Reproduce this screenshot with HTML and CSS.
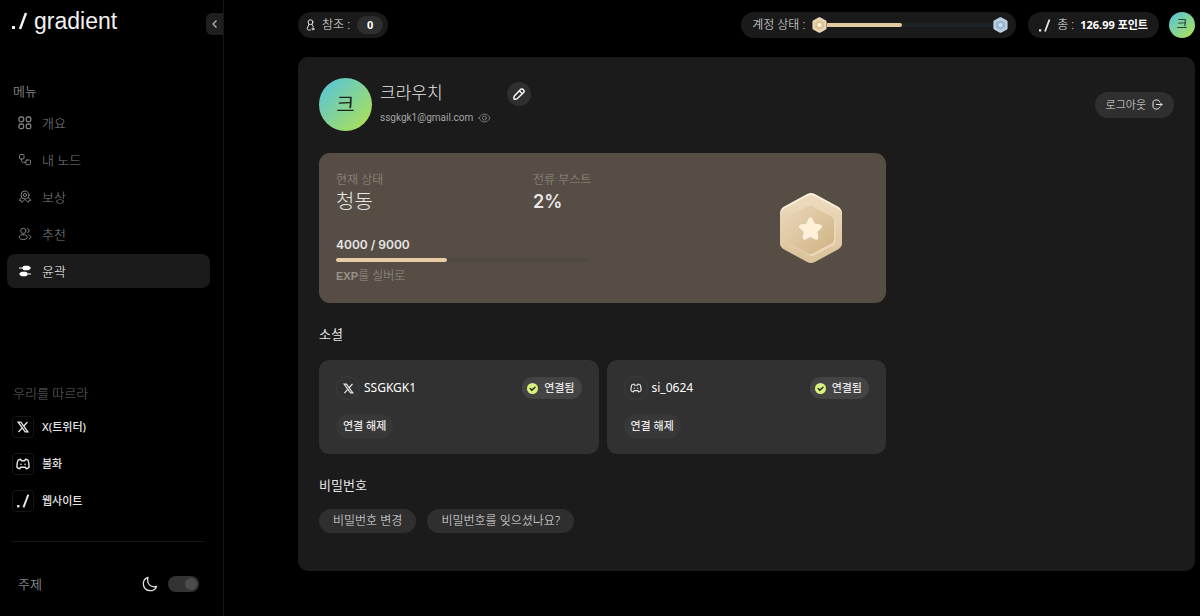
FILE: index.html
```html
<!DOCTYPE html>
<html lang="ko">
<head>
  <meta charset="UTF-8">
  <meta name="viewport" content="width=device-width, initial-scale=1.0">
  <title>Gradient</title>
  <link rel="stylesheet" href="styles.css">
</head>
<body>
  <!-- Shared icons -->
  <svg class="sprite" aria-hidden="true">
    <defs>
      <linearGradient id="bronzeFace" x1="0" y1="0" x2="0" y2="1">
        <stop offset="0" stop-color="#ecd9bc"/>
        <stop offset="1" stop-color="#dcc49c"/>
      </linearGradient>
      <linearGradient id="bronzeInner" x1="0" y1="0" x2="1" y2="1">
        <stop offset="0" stop-color="#e6d2b4"/>
        <stop offset="1" stop-color="#d2b688"/>
      </linearGradient>
      <symbol id="slash" viewBox="0 0 16 20">
        <rect x="0" y="15" width="3" height="3" fill="currentColor"/>
        <line x1="8" y1="18" x2="14" y2="2" stroke="currentColor" stroke-width="2.4"/>
      </symbol>
      <symbol id="xlogo" viewBox="0 0 12 12">
        <path d="M1.2 1.2h2.6l7 9.6H8.2z" fill="none" stroke="currentColor" stroke-width="1.3"/>
        <path d="M10.4 1 6.7 5.2M5.2 6.9 1.5 11" stroke="currentColor" stroke-width="1.3"/>
      </symbol>
      <symbol id="discord" viewBox="0 0 14 12">
        <path d="M4.6 1.2C3.3 1.4 2.500 1.700 2 2.200 1.200 4 .8 6.500.9 9c.6.900 1.600 1.500 2.800 1.800L4.600 9.200h4.800l.9 1.600c1.200-.3 2.200-.9 2.800-1.800.1-2.500-.3-5-1.100-6.800-.5-.5-1.300-.8-2.600-1L8.800 2.700H5.200z" fill="none" stroke="currentColor" stroke-width="1.400" stroke-linejoin="round"/>
        <circle cx="5" cy="6.200" r=".8" fill="currentColor"/>
        <circle cx="9" cy="6.200" r=".8" fill="currentColor"/>
      </symbol>
      <symbol id="check" viewBox="0 0 12 12">
        <circle cx="6" cy="6" r="6" fill="#d9f27e"/>
        <path d="M3.500 6.100 5.300 7.900 8.700 4.600" fill="none" stroke="#222" stroke-width="1.500" stroke-linecap="round"/>
      </symbol>
    </defs>
  </svg>

  <div class="layout">
    <!-- Sidebar -->
    <aside class="sidebar">
      <div class="brand">
        <a class="logo" href="#"><svg width="16" height="20"><use href="#slash"/></svg><span>gradient</span></a>
        <button class="collapse" type="button" aria-label="접기">
          <svg width="7" height="10" viewBox="0 0 7 10"><path d="M5.500 1.500 2 5l3.500 3.500" fill="none" stroke="currentColor" stroke-width="1.200"/></svg>
        </button>
      </div>

      <h2 class="side-title menu-title">메뉴</h2>
      <nav class="nav">
        <a class="nav-item" href="#">
          <svg width="14" height="14" viewBox="0 0 14 14" class="line bold"><rect x="1" y="1" width="4.600" height="4.600" rx="1.600"/><rect x="8.200" y="1" width="4.600" height="4.600" rx="1.600"/><rect x="1" y="8" width="4.600" height="4.600" rx="1.600"/><rect x="8.200" y="8" width="4.600" height="4.600" rx="1.600"/></svg>
          개요
        </a>
        <a class="nav-item" href="#">
          <svg width="14" height="14" viewBox="0 0 14 14" class="line"><rect x="1.500" y="1.500" width="4.500" height="4.500" rx="1"/><rect x="7.800" y="7" width="4.700" height="4.700" rx="1"/><path d="M3.500 6v1.500c0 1.200.7 1.900 1.900 1.900h2.400"/></svg>
          내 노드
        </a>
        <a class="nav-item" href="#">
          <svg width="14" height="14" viewBox="0 0 14 14" class="line"><circle cx="7" cy="5" r="4"/><circle cx="7" cy="5" r="1.600"/><path d="M3.600 7.400 1.200 10.300l1.900.3.900 1.800L7 9.300l3 3.100.9-1.800 1.900-.3-2.400-2.900"/></svg>
          보상
        </a>
        <a class="nav-item" href="#">
          <svg width="14" height="14" viewBox="0 0 14 14" class="line"><circle cx="5.300" cy="3.800" r="2.600"/><path d="M5.300 7.600c-2.300 0-4 1-4 2.500s1.700 2.400 4 2.400 4-.9 4-2.400-1.700-2.500-4-2.500zM9.500 1.500a2.400 2.400 0 0 1 0 4.500M10.800 8c1.300.4 2 1.100 2 2s-.6 1.600-1.700 2"/></svg>
          추천
        </a>
        <a class="nav-item active" href="#">
          <svg width="14" height="14" viewBox="0 0 14 14"><path d="M1 4h12M1 10h12" stroke="currentColor" stroke-width="1.200"/><rect x="4.500" y="1.800" width="7.500" height="4.400" rx="2" fill="currentColor"/><rect x="2" y="7.800" width="7.500" height="4.400" rx="2" fill="currentColor"/></svg>
          윤곽
        </a>
      </nav>

      <h2 class="side-title follow-title">우리를 따르라</h2>
      <div class="follow">
        <a class="follow-item" href="#"><span class="follow-icon"><svg width="12" height="12"><use href="#xlogo"/></svg></span>X(트위터)</a>
        <a class="follow-item" href="#"><span class="follow-icon"><svg width="14" height="12"><use href="#discord"/></svg></span>불화</a>
        <a class="follow-item" href="#"><span class="follow-icon"><svg width="13" height="16"><use href="#slash"/></svg></span>웹사이트</a>
      </div>

      <div class="theme">
        <label for="theme">주제</label>
        <svg width="16" height="16" viewBox="0 0 16 16" class="moon"><path d="M6 1.300C3.200 2.200 1.300 4.800 1.300 7.800c0 3.800 3 6.900 6.800 6.900 2.900 0 5.400-1.700 6.400-4.300-.8.300-1.500.4-2.300.4-3.700 0-6.600-2.900-6.600-6.500 0-1 .1-2 .4-3z"/></svg>
        <input type="checkbox" id="theme" class="switch" checked>
      </div>
    </aside>
    <!-- End Sidebar -->

    <main class="main">
      <header class="topbar">
        <div class="pill referral">
          <svg width="9" height="12" viewBox="0 0 9 12" class="line"><circle cx="4.500" cy="3.200" r="2.400"/><path d="M3 5.400 1.200 9.300c-.2 1 .5 1.700 1.400 1.700h1.700M6 5.400l1.300 2.200"/><circle cx="7" cy="9.900" r="1"/></svg>
          <span>참조 :</span>
          <span class="count">0</span>
        </div>
        <div class="pill account">
          <span>계정 상태 :</span>
          <div class="level">
            <svg width="15" height="16" viewBox="0 0 15 16"><path d="M7.500 1.500 13.300 4.700v6.600L7.500 14.500 1.700 11.300V4.700z" fill="#dcc397" stroke="#e8d5b4" stroke-width="2.600" stroke-linejoin="round"/><circle cx="7.500" cy="8" r="2" fill="#fff3de"/></svg>
            <div class="level-track"><div class="level-fill"></div></div>
            <svg width="15" height="16" viewBox="0 0 15 16"><path d="M7.500 1.500 13.300 4.700v6.600L7.500 14.500 1.700 11.300V4.700z" fill="#9db6d0" stroke="#bccfe2" stroke-width="2.600" stroke-linejoin="round"/><circle cx="7.500" cy="8" r="2" fill="#cbe2f8"/></svg>
          </div>
        </div>
        <div class="pill points">
          <svg width="12" height="15"><use href="#slash"/></svg>
          <span>총 :</span>
          <strong>126.99 포인트</strong>
        </div>
        <div class="avatar small">크</div>
      </header>

      <section class="panel">
        <div class="profile">
          <div class="avatar">크</div>
          <div class="who">
            <h1>크라우치</h1>
            <div class="email">
              <span>ssgkgk1@gmail.com</span>
              <svg width="13" height="10" viewBox="0 0 13 10" class="line"><path d="M1 5c1.300-2.500 3.200-3.900 5.500-3.900S10.700 2.500 12 5c-1.300 2.500-3.200 3.900-5.500 3.900S2.300 7.500 1 5z"/><circle cx="6.500" cy="5" r="2"/></svg>
            </div>
          </div>
          <button class="edit" type="button" aria-label="편집">
            <svg width="14" height="14" viewBox="0 0 14 14"><path d="M8.500 2.400 2.600 8.700c-.7.800-1 3-.6 3.400s2.600.1 3.400-.6l6.200-5.900c1.700-1.700-1.400-4.900-3.100-3.200zM7.300 3.700l3.100 3.100" fill="none" stroke="currentColor" stroke-width="1.400" stroke-linejoin="round"/></svg>
          </button>
          <button class="logout" type="button">
            로그아웃
            <svg width="11" height="11" viewBox="0 0 11 11" class="line"><path d="M7.500 2.800C7.300 1.600 6.500 1 5.200 1H4C2 1 1 2 1 4v3c0 2 1 3 3 3h1.200c1.300 0 2.100-.6 2.300-1.800M4.500 5.500H10M8.400 3.900 10 5.500 8.400 7.100"/></svg>
          </button>
        </div>

        <div class="content">
          <div class="status">
            <div class="stats">
              <dl>
                <div class="stat"><dt>현재 상태</dt><dd>청동</dd></div>
                <div class="stat"><dt>전류 부스트</dt><dd class="boost">2%</dd></div>
              </dl>
              <div class="exp">4000 / 9000</div>
              <div class="exp-track"><div class="exp-fill"></div></div>
              <div class="exp-note"><b>EXP</b>를 실버로</div>
            </div>
            <svg class="medal" width="64" height="72" viewBox="0 0 64 72">
              <path d="M32 9 55 21.500v28L32 62 9 49.500v-28z" fill="#fff2dc" stroke="#fff2dc" stroke-width="16" stroke-linejoin="round"/>
              <path d="M32 11 55 23.500v27L32 63 9 50.500v-27z" fill="url(#bronzeFace)" stroke="url(#bronzeFace)" stroke-width="16" stroke-linejoin="round"/>
              <path d="M33 20 52 30v19L33 59 13 48V29z" fill="#ead6b6" stroke="#ead6b6" stroke-width="10" stroke-linejoin="round"/>
              <path d="M31 19 50 29v18L31 57 12 47V28z" fill="url(#bronzeInner)" stroke="url(#bronzeInner)" stroke-width="10" stroke-linejoin="round"/>
              <path d="m31.500 27.500 3 6 6.500 1-4.700 4.700 1 6.500-5.800-3-5.800 3 1-6.500-4.700-4.700 6.500-1z" fill="#fff0da" stroke="#fff0da" stroke-width="4" stroke-linejoin="round"/>
            </svg>
          </div>

          <h2>소셜</h2>
          <div class="socials">
            <div class="social">
              <div class="social-head">
                <span class="social-icon"><svg width="11" height="11"><use href="#xlogo"/></svg></span>
                <span class="handle">SSGKGK1</span>
                <span class="connected"><svg width="11" height="11"><use href="#check"/></svg>연결됨</span>
              </div>
              <button class="disconnect" type="button">연결 해제</button>
            </div>
            <div class="social">
              <div class="social-head">
                <span class="social-icon"><svg width="12" height="10"><use href="#discord"/></svg></span>
                <span class="handle">si_0624</span>
                <span class="connected"><svg width="11" height="11"><use href="#check"/></svg>연결됨</span>
              </div>
              <button class="disconnect" type="button">연결 해제</button>
            </div>
          </div>

          <h2>비밀번호</h2>
          <div class="passwords">
            <button type="button">비밀번호 변경</button>
            <button type="button">비밀번호를 잊으셨나요?</button>
          </div>
        </div>
      </section>
    </main>
  </div>
</body>
</html>
```
FILE: styles.css
```css
* {
  box-sizing: border-box;
}
body {
  margin: 0;
  background-color: #000;
  color: #e6e6e6;
  font-family: "Noto Sans", "Noto Sans CJK KR", sans-serif;
  font-size: 12px;
  line-height: 16px;
}
h1, h2, dl, dd {
  margin: 0;
}
a {
  color: inherit;
  text-decoration: none;
}
button {
  display: flex;
  align-items: center;
  justify-content: center;
  padding: 0;
  border: none;
  background: none;
  color: inherit;
  font: inherit;
  cursor: pointer;
  white-space: nowrap;
}
svg {
  display: block;
  flex: none;
}
.sprite {
  position: absolute;
  width: 0;
  height: 0;
}
.line {
  fill: none;
  stroke: currentColor;
  stroke-width: 1;
  stroke-linecap: round;
  stroke-linejoin: round;
}
.line.bold {
  stroke-width: 1.3;
}
.layout {
  display: flex;
  min-height: 100vh;
}

/* Sidebar */
.sidebar {
  display: flex;
  flex-direction: column;
  flex: none;
  width: 224px;
  padding-bottom: 22px;
  border-right: 1px solid #161616;
}
.brand {
  display: flex;
  align-items: center;
  justify-content: space-between;
  height: 48px;
  padding-left: 12px;
}
.logo {
  display: flex;
  align-items: center;
  gap: 6px;
  margin-bottom: 6px;
  color: #f2f2f2;
  font-family: "Liberation Sans", sans-serif;
  font-size: 23px;
  line-height: 28px;
}
.collapse {
  width: 17px;
  height: 22px;
  border-radius: 6px 0 0 6px;
  background-color: #1f1f1f;
  color: #bbb;
}
.side-title {
  padding-left: 13px;
  font-size: 13px;
  font-weight: 300;
}
.menu-title {
  margin: 35px 0 7px;
  color: #b0b0b0;
}
.nav {
  display: flex;
  flex-direction: column;
  gap: 3px;
  padding: 0 13px 0 7px;
}
.nav-item {
  display: flex;
  align-items: center;
  gap: 10px;
  height: 34px;
  padding-left: 11px;
  border-radius: 8px;
  color: #808080;
  font-size: 13px;
  font-weight: 300;
}
.nav-item.active {
  background-color: #1b1b1b;
  color: #fff;
}
.follow-title {
  margin: 97px 0 7px;
  color: #666;
}
.follow {
  display: flex;
  flex-direction: column;
  gap: 15px;
  padding: 8px 12px;
}
.follow-item {
  display: flex;
  align-items: center;
  gap: 8px;
  font-size: 11px;
  font-weight: 500;
}
.follow-icon {
  display: flex;
  align-items: center;
  justify-content: center;
  width: 22px;
  height: 22px;
  border: 1px solid #161616;
  border-radius: 4px;
}
.theme {
  display: flex;
  align-items: center;
  margin: 21px 18px 0 12px;
  padding: 34px 6px 0;
  border-top: 1px solid #161616;
  color: #bbb;
  font-size: 13px;
  font-weight: 300;
}
.moon {
  margin: 0 10px 0 auto;
  fill: none;
  stroke: #e0e0e0;
  stroke-width: 1.3;
  stroke-linejoin: round;
}
.switch {
  display: flex;
  justify-content: flex-end;
  width: 31px;
  height: 16px;
  margin: 0;
  padding: 2px;
  border-radius: 8px;
  background-color: #333;
  appearance: none;
}
.switch::before {
  content: "";
  width: 12px;
  height: 12px;
  border-radius: 50%;
  background-color: #4c4c4c;
}
.switch:not(:checked) {
  justify-content: flex-start;
}
/* End Sidebar */

.main {
  flex: 1;
  min-width: 0;
  padding: 12px 5px 45px 74px;
}
.topbar {
  display: flex;
  align-items: center;
  margin-bottom: 19px;
}
.pill {
  display: flex;
  align-items: center;
  height: 26px;
  border-radius: 13px;
  background-color: #1a1a1a;
  font-weight: 300;
  white-space: nowrap;
}
.referral {
  gap: 7px;
  margin-right: auto;
  padding: 0 5px 0 8px;
}
.count {
  width: 26px;
  border-radius: 9px;
  background-color: #2e2e2e;
  color: #fff;
  font-size: 11px;
  font-weight: 700;
  line-height: 18px;
  text-align: center;
}
.account {
  gap: 7px;
  width: 275px;
  padding: 0 8px 0 11px;
}
.level {
  display: flex;
  align-items: center;
  flex: 1;
}
.level-track {
  flex: 1;
  height: 4px;
  background-color: #1f2327;
}
.level-fill {
  width: 45%;
  height: 4px;
  border-radius: 0 2px 2px 0;
  background-color: #e3c9a2;
}
.points {
  gap: 6px;
  margin: 0 10px 0 12px;
  padding: 0 11px;
}
.points strong {
  color: #fff;
  font-size: 11px;
  font-weight: 700;
}
.avatar {
  display: flex;
  align-items: center;
  justify-content: center;
  flex: none;
  width: 53px;
  height: 53px;
  border-radius: 50%;
  background: linear-gradient(135deg, #51c3e4, #b4e34b);
  color: #222;
  font-size: 20px;
}
.avatar.small {
  width: 26px;
  height: 26px;
  font-size: 12px;
}

.panel {
  padding: 21px;
  padding-bottom: 38px;
  border-radius: 10px;
  background-color: #1b1b1b;
}
.profile {
  display: flex;
  align-items: center;
  margin-bottom: 22px;
}
.who {
  width: 127px;
  margin: 0 0 4px 8px;
}
.who h1 {
  font-size: 17px;
  font-weight: 300;
  line-height: 26px;
}
.email {
  display: flex;
  align-items: center;
  gap: 5px;
  margin-top: 4px;
  color: #a5a5a5;
  font-family: Roboto, sans-serif;
  font-size: 10px;
}
.email svg {
  color: #777;
}
.edit {
  width: 24px;
  height: 24px;
  margin-bottom: 22px;
  border-radius: 50%;
  background-color: #2f2f2f;
  color: #fff;
}
.logout {
  gap: 6px;
  height: 26px;
  margin-left: auto;
  padding: 0 11px;
  border-radius: 13px;
  background-color: #2f2f2f;
  font-size: 11px;
  font-weight: 300;
}
.content {
  max-width: 567px;
}
.status {
  display: flex;
  align-items: center;
  justify-content: space-between;
  padding: 19px 43px 19px 17px;
  border-radius: 11px;
  background-color: #564e44;
}
.stats {
  width: 253px;
}
.stats dl {
  display: flex;
}
.stat {
  width: 197px;
  flex: none;
}
.stat dt {
  color: #9a938a;
  font-weight: 300;
}
.stat dd {
  font-size: 20px;
  font-weight: 300;
  line-height: 28px;
}
.stat .boost {
  font-family: Inter, sans-serif;
  font-size: 18px;
  font-weight: 600;
}
.exp {
  margin-top: 21px;
  font-family: Inter, sans-serif;
  font-weight: 600;
}
.exp-track {
  height: 4px;
  margin: 5px 0;
  border-radius: 2px;
  background-color: #4f483f;
}
.exp-fill {
  width: 44%;
  height: 4px;
  border-radius: 2px;
  background-color: #e9cba7;
}
.exp-note {
  margin-top: 6px;
  color: #9a938a;
  font-weight: 300;
}
.exp-note b {
  font-family: "Liberation Sans", sans-serif;
  font-size: 11px;
  font-weight: 700;
}
.content h2 {
  font-size: 13px;
  font-weight: 400;
  line-height: 20px;
}
.status + h2 {
  margin: 21px 0 16px;
}
.socials {
  display: grid;
  grid-template-columns: 1fr 1fr;
  gap: 8px;
  margin-bottom: 21px;
}
.social {
  padding: 16px 17px;
  border-radius: 10px;
  background-color: #313131;
}
.social-head {
  display: flex;
  align-items: center;
  gap: 4px;
  margin-bottom: 14px;
}
.social-icon {
  display: flex;
  align-items: center;
  justify-content: center;
  width: 24px;
  height: 24px;
  border: 1px solid #3c3c3c;
  border-radius: 50%;
}
.handle {
  color: #fff;
  font-size: 12px;
}
.connected {
  display: flex;
  align-items: center;
  gap: 6px;
  height: 22px;
  margin-left: auto;
  padding: 0 7px 0 5px;
  border-radius: 11px;
  background-color: #444;
  font-size: 11px;
  font-weight: 500;
}
.disconnect {
  height: 24px;
  padding: 0 7px;
  border-radius: 12px;
  background-color: #383838;
  font-size: 11px;
  font-weight: 500;
}
.passwords {
  display: flex;
  gap: 11px;
  margin-top: 14px;
}
.passwords button {
  height: 24px;
  padding: 0 14px;
  border-radius: 12px;
  background-color: #2f2f2f;
  font-weight: 300;
}
```
